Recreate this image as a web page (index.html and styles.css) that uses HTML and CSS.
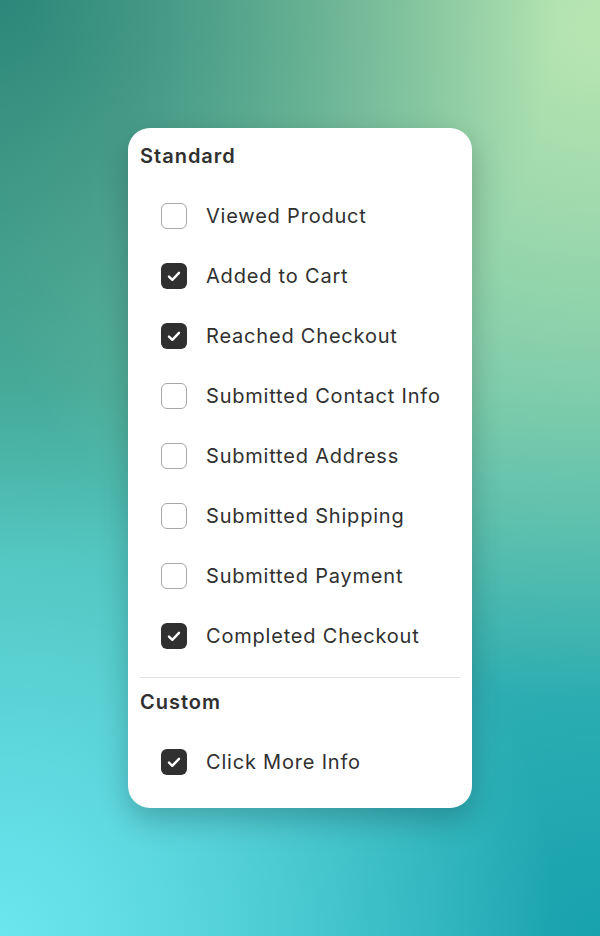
FILE: index.html
```html
<!DOCTYPE html>
<html lang="en">
<head>
    <meta charset="UTF-8">
    <meta name="viewport" content="width=device-width, initial-scale=1.0">
    <title>Events</title>
    <link rel="stylesheet" href="styles.css">
</head>
<body>
    <div class="card">
        <h2 class="group-title">Standard</h2>
        <ul class="options">
            <li class="option"><span class="box"></span>Viewed Product</li>
            <li class="option"><span class="box checked"><svg viewBox="0 0 26 26"><path d="M8 13.6l3.3 3.2 6.7-7"/></svg></span>Added to Cart</li>
            <li class="option"><span class="box checked"><svg viewBox="0 0 26 26"><path d="M8 13.6l3.3 3.2 6.7-7"/></svg></span>Reached Checkout</li>
            <li class="option"><span class="box"></span>Submitted Contact Info</li>
            <li class="option"><span class="box"></span>Submitted Address</li>
            <li class="option"><span class="box"></span>Submitted Shipping</li>
            <li class="option"><span class="box"></span>Submitted Payment</li>
            <li class="option"><span class="box checked"><svg viewBox="0 0 26 26"><path d="M8 13.6l3.3 3.2 6.7-7"/></svg></span>Completed Checkout</li>
        </ul>
        <hr class="divider">
        <h2 class="group-title">Custom</h2>
        <ul class="options">
            <li class="option"><span class="box checked"><svg viewBox="0 0 26 26"><path d="M8 13.6l3.3 3.2 6.7-7"/></svg></span>Click More Info</li>
        </ul>
    </div>
</body>
</html>
```

FILE: styles.css
```css
html, body {
    height: 100%;
}
body {
    margin: 0;
    font-family: 'Inter', 'Roboto', sans-serif;
    color: #303030;
    background-color: #4cbcb4;
    background-image:
        radial-gradient(circle at 0% 0%, #2c877a 0%, rgba(44, 135, 122, 0) 50%),
        radial-gradient(circle at 100% 3%, #b8e6b2 0%, rgba(184, 230, 178, 0) 62%),
        radial-gradient(circle at 0% 100%, #6ce6ee 0%, rgba(108, 230, 238, 0) 50%),
        radial-gradient(circle at 100% 100%, #18a2ad 0%, rgba(24, 162, 173, 0) 50%),
        linear-gradient(180deg, #6ab898 0%, #4cb8a8 50%, #3cbcc4 100%);
    display: flex;
    justify-content: center;
    align-items: flex-start;
    padding-top: 128px;
    box-sizing: border-box;
}
.card {
    width: 344px;
    box-sizing: border-box;
    background: #fff;
    border-radius: 22px;
    padding: 14px 12px 16px;
    box-shadow: 0 12px 30px rgba(0, 0, 0, 0.22);
}
.group-title {
    margin: 0;
    font-size: 20px;
    font-weight: 600;
    line-height: 28px;
    letter-spacing: 1px;
}
.options {
    list-style: none;
    margin: 16px 0 0;
    padding: 0;
}
.option {
    display: flex;
    align-items: center;
    height: 60px;
    padding-left: 21px;
    font-size: 20px;
    letter-spacing: 0.8px;
}
.box {
    width: 26px;
    height: 26px;
    box-sizing: border-box;
    border: 1.5px solid #a8a8a8;
    border-radius: 6px;
    margin-right: 19px;
    flex-shrink: 0;
}
.box.checked {
    background: #303030;
    border: 0;
}
.box svg {
    display: block;
    width: 26px;
    height: 26px;
}
.box svg path {
    fill: none;
    stroke: #fff;
    stroke-width: 2.4;
    stroke-linecap: round;
    stroke-linejoin: round;
}
.divider {
    border: 0;
    border-top: 1px solid #e3e3e3;
    margin: 11px 0 10px;
}
```
